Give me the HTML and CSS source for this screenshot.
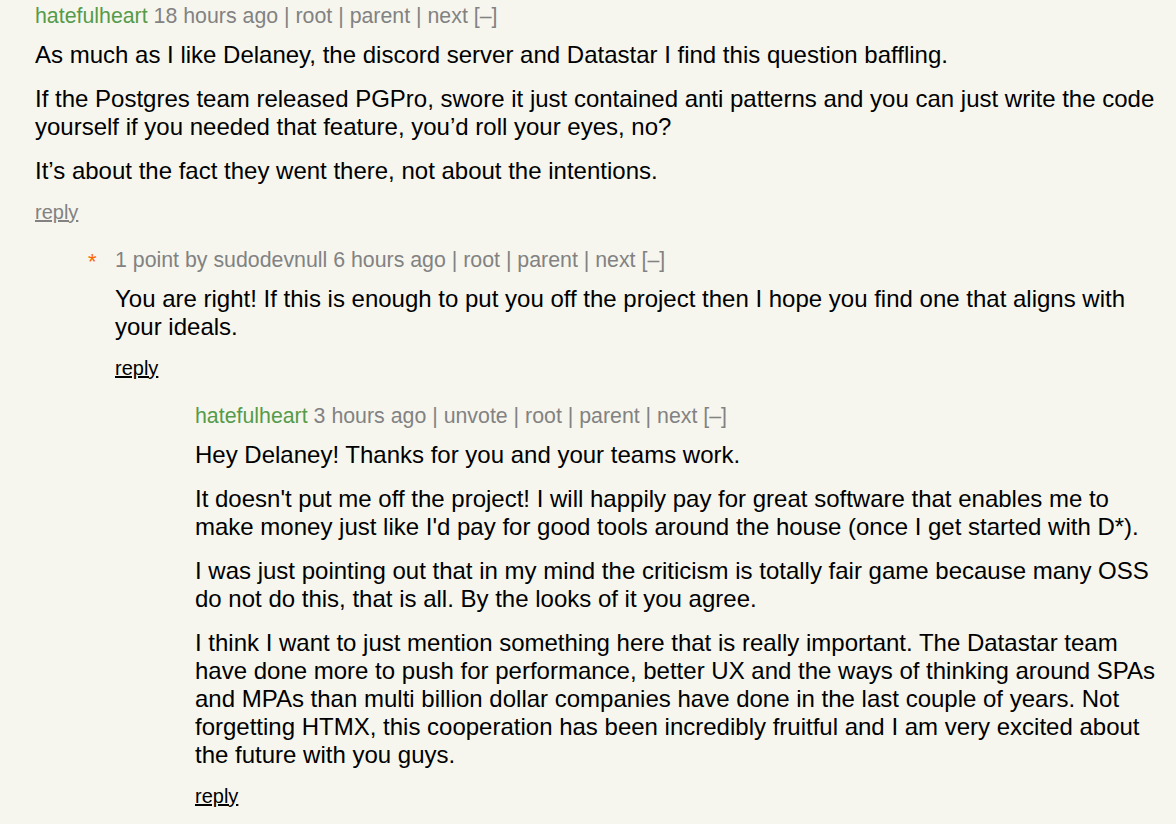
FILE: index.html
```html
<!DOCTYPE html>
<html>
<head>
<meta charset="utf-8">
<link rel="stylesheet" href="styles.css">
</head>
<body>
<div class="thread">
  <div class="comment">
    <div class="indent lvl0"></div>
    <div class="vote"></div>
    <div class="body">
      <div class="head"><a class="user">hatefulheart</a> <span class="meta">18 hours ago | root | parent | next [–]</span></div>
      <div class="text">
        <p>As much as I like Delaney, the discord server and Datastar I find this question baffling.</p>
        <p>If the Postgres team released PGPro, swore it just contained anti patterns and you can just write the code yourself if you needed that feature, you’d roll your eyes, no?</p>
        <p>It’s about the fact they went there, not about the intentions.</p>
      </div>
      <div class="reply"><a class="faded">reply</a></div>
    </div>
  </div>
  <div class="comment">
    <div class="indent lvl1"></div>
    <div class="vote"><span class="star">*</span></div>
    <div class="body">
      <div class="head"><span class="meta">1 point by sudodevnull 6 hours ago | root | parent | next [–]</span></div>
      <div class="text">
        <p>You are right! If this is enough to put you off the project then I hope you find one that aligns with your ideals.</p>
      </div>
      <div class="reply"><a>reply</a></div>
    </div>
  </div>
  <div class="comment">
    <div class="indent lvl2"></div>
    <div class="vote"></div>
    <div class="body">
      <div class="head"><a class="user">hatefulheart</a> <span class="meta">3 hours ago | unvote | root | parent | next [–]</span></div>
      <div class="text">
        <p>Hey Delaney! Thanks for you and your teams work.</p>
        <p>It doesn't put me off the project! I will happily pay for great software that enables me to make money just like I'd pay for good tools around the house (once I get started with D*).</p>
        <p>I was just pointing out that in my mind the criticism is totally fair game because many OSS do not do this, that is all. By the looks of it you agree.</p>
        <p>I think I want to just mention something here that is really important. The Datastar team have done more to push for performance, better UX and the ways of thinking around SPAs and MPAs than multi billion dollar companies have done in the last couple of years. Not forgetting HTMX, this cooperation has been incredibly fruitful and I am very excited about the future with you guys.</p>
      </div>
      <div class="reply"><a>reply</a></div>
    </div>
  </div>
</div>
</body>
</html>
```
FILE: styles.css
```css
html, body {
  margin: 0;
  padding: 0;
  background: #f6f6ef;
}
body {
  font-family: "Liberation Sans", Arial, sans-serif;
  color: #000;
  overflow: hidden;
}
.thread {
  padding: 4px 8px 0 8px;
}
.comment {
  display: flex;
  margin-bottom: 24px;
}
.indent { flex: none; }
.lvl0 { width: 0; }
.lvl1 { width: 80px; }
.lvl2 { width: 160px; }
.vote {
  flex: none;
  width: 27px;
}
.star {
  display: block;
  color: #ff6600;
  font-size: 22px;
  line-height: 24px;
  padding-top: 2px;
}
.body {
  flex: 1;
  min-width: 0;
}
.head {
  font-size: 21.33px;
  line-height: 24px;
  color: #828282;
  white-space: nowrap;
}
.user {
  color: #559b49;
}
.text {
  margin-top: 13px;
  font-size: 24px;
  line-height: 28px;
}
.text p {
  margin: 0 0 16px;
}
.text p:last-child {
  margin-bottom: 0;
}
.reply {
  margin-top: 15px;
  font-size: 20px;
  line-height: 24px;
}
.reply a {
  color: #000;
  text-decoration: underline;
}
.reply a.faded {
  color: #828282;
}
```
